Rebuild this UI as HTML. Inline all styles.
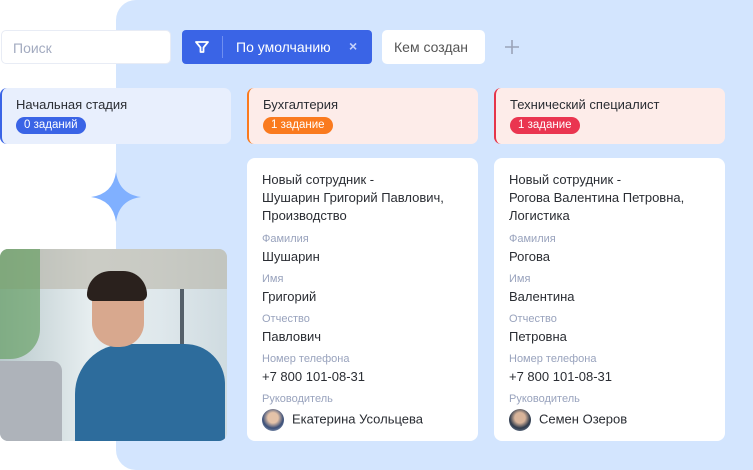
<!DOCTYPE html>
<html><head><meta charset="utf-8"><style>
*{box-sizing:border-box;margin:0;padding:0}
body{width:753px;height:470px;background:#fff;position:relative;overflow:hidden;font-family:"Liberation Sans",sans-serif;color:#2a2d33}
.bg{position:absolute;left:116px;top:0;width:660px;height:470px;background:#d3e5fe;border-radius:20px 0 0 20px}
.abs{position:absolute}
.search{left:1px;top:30px;width:170px;height:34px;background:#fff;border:1px solid #e8ecf5;border-radius:5px;font-size:14px;color:#a3abc0;padding:9px 11px}
.filt{left:182px;top:30px;width:190px;height:34px;background:#3a64e6;border-radius:4px;color:#fff;font-size:14px}
.kem{left:382px;top:30px;width:103px;height:34px;background:#fff;border-radius:5px;font-size:14px;color:#555;padding:9px 12px}
.hdr{height:56px;border-radius:7px;padding:9px 14px;font-size:13px}
.badge{display:inline-block;margin-top:5px;height:17px;border-radius:9px;font-size:11.5px;color:#fff;padding:2px 8px;line-height:13px}
.card{top:158px;width:231px;height:283px;background:#fff;border-radius:8px;padding:13px 15px;font-size:13px}
.t{line-height:18px}
.l{font-size:11px;color:#99a3bd;margin-top:6px;line-height:14px}
.v{line-height:18px;margin-top:2px}
.av{display:inline-block;width:22px;height:22px;border-radius:50%;vertical-align:middle;margin-right:8px}
</style></head><body>
<div class="bg"></div>
<div class="abs search">Поиск</div>
<div class="abs filt">
 <svg class="abs" style="left:12px;top:9px" width="16" height="16" viewBox="0 0 16 16"><path d="M2 3h12L9.5 8.5V13h-3V8.5z" fill="none" stroke="#fff" stroke-width="1.8" stroke-linejoin="round"/></svg>
 <div class="abs" style="left:40px;top:6px;width:1px;height:22px;background:#6f8ff0"></div>
 <div class="abs" style="left:54px;top:9px">По умолчанию</div>
 <div class="abs" style="left:167px;top:8px;font-size:14px;color:#c5d2fa;font-weight:bold">×</div>
</div>
<div class="abs kem">Кем создан</div>
<svg class="abs" style="left:504px;top:39px" width="16" height="16" viewBox="0 0 16 16"><path d="M8 1v14M1 8h14" stroke="#9aa3b8" stroke-width="1.6"/></svg>

<div class="abs hdr" style="left:0;top:88px;width:231px;background:#e8effd;border-left:2px solid #3a64e6">Начальная стадия<br><span class="badge" style="background:#3a64e6">0 заданий</span></div>
<div class="abs hdr" style="left:247px;top:88px;width:231px;background:#fdece9;border-left:2px solid #fa7a1e">Бухгалтерия<br><span class="badge" style="background:#fa7a1e">1 задание</span></div>
<div class="abs hdr" style="left:494px;top:88px;width:231px;background:#fdece9;border-left:2px solid #e5354a">Технический специалист<br><span class="badge" style="background:#ea3550">1 задание</span></div>

<svg class="abs" style="left:91px;top:172px" width="50" height="50" viewBox="0 0 50 50"><path d="M25 0Q28 22 50 25Q28 28 25 50Q22 28 0 25Q22 22 25 0z" fill="#80b0ff"/></svg>

<div class="abs" style="left:0;top:249px;width:227px;height:192px;border-radius:8px;overflow:hidden;background:linear-gradient(90deg,#b9c9cc 0%,#e7eef0 40%,#dfe8ec 70%,#cfdbe0 100%)">
 <div class="abs" style="left:0;top:0;width:227px;height:40px;background:#b9b5a8;opacity:.6"></div>
 <div class="abs" style="left:0;top:0;width:40px;height:110px;background:#5a9a55;opacity:.6;border-radius:0 0 30px 0"></div>
 <div class="abs" style="left:180px;top:40px;width:4px;height:152px;background:#55606a"></div>
 <div class="abs" style="left:75px;top:95px;width:150px;height:110px;background:#2d6c9c;border-radius:50px 40px 0 0"></div>
 <div class="abs" style="left:92px;top:28px;width:52px;height:70px;background:#d8a88e;border-radius:24px"></div>
 <div class="abs" style="left:87px;top:22px;width:60px;height:30px;background:#2a211d;border-radius:30px 30px 8px 8px"></div>
 <div class="abs" style="left:0;top:112px;width:62px;height:80px;background:#aeb3ba;border-radius:0 10px 0 0"></div>
</div>

<div class="abs card" style="left:247px">
 <div class="t">Новый сотрудник -<br>Шушарин Григорий Павлович,<br>Производство</div>
 <div class="l" style="margin-top:7px">Фамилия</div><div class="v">Шушарин</div>
 <div class="l">Имя</div><div class="v">Григорий</div>
 <div class="l">Отчество</div><div class="v">Павлович</div>
 <div class="l">Номер телефона</div><div class="v">+7 800 101-08-31</div>
 <div class="l">Руководитель</div><div class="v" style="margin-top:3px"><span class="av" style="background:radial-gradient(circle at 50% 40%,#e4c2a8 30%,#3b4f78 60%,#b0c0d4)"></span>Екатерина Усольцева</div>
</div>
<div class="abs card" style="left:494px">
 <div class="t">Новый сотрудник -<br>Рогова Валентина Петровна,<br>Логистика</div>
 <div class="l" style="margin-top:7px">Фамилия</div><div class="v">Рогова</div>
 <div class="l">Имя</div><div class="v">Валентина</div>
 <div class="l">Отчество</div><div class="v">Петровна</div>
 <div class="l">Номер телефона</div><div class="v">+7 800 101-08-31</div>
 <div class="l">Руководитель</div><div class="v" style="margin-top:3px"><span class="av" style="background:radial-gradient(circle at 50% 40%,#d8b49a 30%,#2e3a4c 60%,#8a9aae)"></span>Семен Озеров</div>
</div>
</body></html>
